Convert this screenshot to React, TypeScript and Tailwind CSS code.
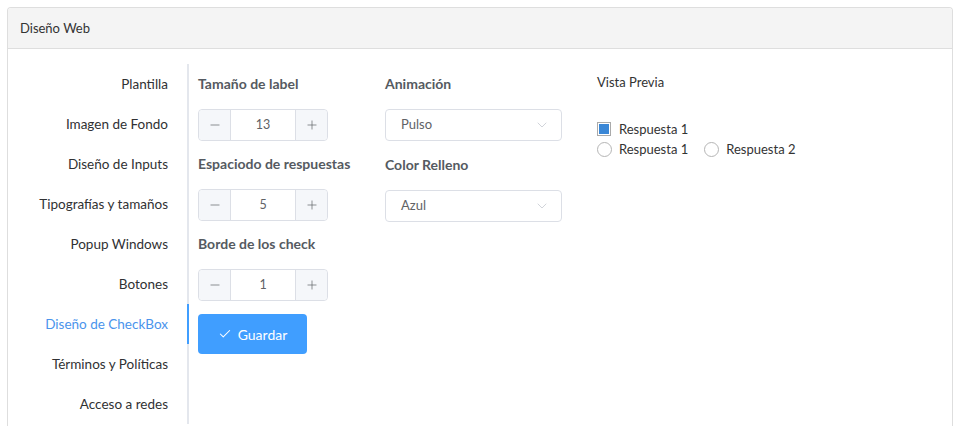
import { Check, ChevronDown, Minus, Plus } from 'lucide-react'

const NAV_ITEMS = [
  'Plantilla',
  'Imagen de Fondo',
  'Diseño de Inputs',
  'Tipografías y tamaños',
  'Popup Windows',
  'Botones',
  'Diseño de CheckBox',
  'Términos y Políticas',
  'Acceso a redes',
]

function NumberInput({ value }: { value: number }) {
  return (
    <div className="flex h-8 w-[130px] rounded border border-[#dcdfe6] text-[12.5px] text-[#606266]">
      <span className="flex w-8 items-center justify-center rounded-l bg-[#f5f7fa] border-r border-[#dcdfe6] text-[#606266]">
        <Minus size={14} strokeWidth={1.2} />
      </span>
      <span className="flex flex-1 items-center justify-center bg-white">{value}</span>
      <span className="flex w-8 items-center justify-center rounded-r bg-[#f5f7fa] border-l border-[#dcdfe6] text-[#606266]">
        <Plus size={14} strokeWidth={1.2} />
      </span>
    </div>
  )
}

function Select({ value }: { value: string }) {
  return (
    <div className="flex h-8 w-[177px] items-center justify-between rounded border border-[#dcdfe6] pl-[15px] pr-[11px] text-[13px] text-[#606266]">
      <span>{value}</span>
      <ChevronDown size={16} strokeWidth={1.1} className="text-[#c0c4cc]" />
    </div>
  )
}

function Label({ children }: { children: React.ReactNode }) {
  return <div className="h-10 leading-10 text-[14px] font-bold text-[#555a61]">{children}</div>
}

export default function App() {
  return (
    <div className="min-h-[426px] bg-white pt-[7px] pl-[7px] pr-[13px]" style={{ fontFamily: 'Lato, "Open Sans", sans-serif' }}>
      <div className="h-[419px] overflow-hidden rounded-t border border-b-0 border-[#dedede] bg-white">
        <div className="flex h-[41px] items-center border-b border-[#dedede] bg-[#f4f4f4] px-3 pt-px text-[13px] text-[#333]">
          Diseño Web
        </div>

        <div className="flex pt-[15px]">
          <ul className="w-[181px] shrink-0 border-r-2 border-[#e4e7ed] text-[13.5px] text-[#303133]">
            {NAV_ITEMS.map((item) => {
              const active = item === 'Diseño de CheckBox'
              return (
                <li
                  key={item}
                  className={`relative h-10 pr-[19px] text-right leading-10 ${active ? 'text-[#4a94ec]' : ''}`}
                >
                  {item}
                  {active && <span className="absolute -right-[2px] top-0 h-10 w-[2px] bg-[#409eff]" />}
                </li>
              )
            })}
          </ul>

          <div className="flex pl-[9px]">
            <div className="w-[187px]">
              <Label>Tamaño de label</Label>
              <div className="mt-[5px] mb-[3px]">
                <NumberInput value={13} />
              </div>
              <Label>Espaciodo de respuestas</Label>
              <div className="mt-[5px] mb-[3px]">
                <NumberInput value={5} />
              </div>
              <Label>Borde de los check</Label>
              <div className="mt-[5px]">
                <NumberInput value={1} />
              </div>
              <button className="mt-[13px] flex h-10 w-[109px] items-center justify-center gap-[6px] rounded bg-[#409eff] text-[14px] text-white">
                <Check size={14} strokeWidth={1.8} />
                Guardar
              </button>
            </div>

            <div className="w-[212px]">
              <Label>Animación</Label>
              <div className="mt-[5px] mb-[4px]">
                <Select value="Pulso" />
              </div>
              <Label>Color Relleno</Label>
              <div className="mt-[5px]">
                <Select value="Azul" />
              </div>
            </div>

            <div className="text-[13px] text-[#333]">
              <div className="mt-[8px] leading-5">Vista Previa</div>
              <div className="mt-[27px] flex items-center gap-2 leading-5">
                <span className="flex h-[14px] w-[14px] items-center justify-center border border-[#aaa] bg-white">
                  <span className="h-[10px] w-[10px] bg-[#3a87d6]" />
                </span>
                Respuesta 1
              </div>
              <div className="flex items-center leading-5">
                <span className="flex items-center gap-[7px]">
                  <span className="h-[15px] w-[15px] rounded-full border border-[#b5b5b5] bg-white" />
                  Respuesta 1
                </span>
                <span className="ml-[16px] flex items-center gap-[7px]">
                  <span className="h-[15px] w-[15px] rounded-full border border-[#b5b5b5] bg-white" />
                  Respuesta 2
                </span>
              </div>
            </div>
          </div>
        </div>
      </div>
    </div>
  )
}
